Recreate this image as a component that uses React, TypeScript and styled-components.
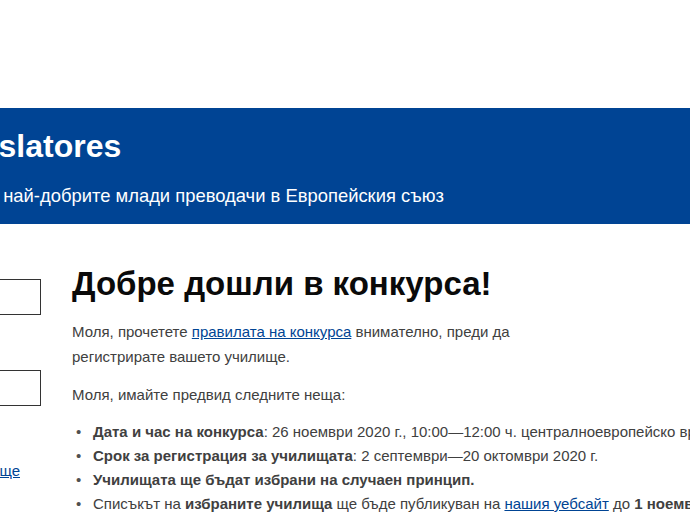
import React from "react";
import styled, { createGlobalStyle } from "styled-components";

const GlobalStyle = createGlobalStyle`
  html, body {
    margin: 0;
    padding: 0;
    background: #ffffff;
    overflow: hidden;
  }
  body {
    font-family: "Liberation Sans", Arial, sans-serif;
    color: #404040;
  }
`;

const Page = styled.div`
  width: 1400px;
  margin-left: -260px;
`;

const TopBar = styled.div`
  height: 108px;
  background: #ffffff;
`;

const Banner = styled.header`
  height: 116px;
  background: #004494;
  color: #ffffff;
  box-sizing: border-box;
  padding: 20px 0 0 54px;
`;

const SiteTitle = styled.h1`
  margin: 0;
  font-size: 32px;
  line-height: 1.15;
  font-weight: 700;
`;

const SiteSubtitle = styled.p`
  margin: 20px 0 0 -5px;
  font-size: 18.4px;
  line-height: 1.15;
`;

const Body = styled.div`
  display: flex;
  padding-top: 40px;
`;

const Sidebar = styled.aside`
  width: 301px;
  flex: none;
  display: flex;
  flex-direction: column;
`;

const Field = styled.div<{ $gap?: number }>`
  display: flex;
  flex-direction: column;
  margin-top: ${(p) => p.$gap ?? 0}px;
`;

const Label = styled.label`
  font-size: 15px;
  line-height: 15px;
  color: #404040;
`;

const Input = styled.input`
  box-sizing: border-box;
  width: 100%;
  height: 36px;
  border: 1px solid #333333;
  border-radius: 0;
  padding: 0 8px;
  font: inherit;
  outline: none;
`;

const SideLink = styled.a`
  align-self: flex-end;
  margin: 56px 21px 0 0;
  font-size: 15px;
  line-height: 17px;
  color: #004494;
  text-decoration: underline;
`;

const Main = styled.main`
  margin-left: 31px;
  padding-top: 1px;
  flex: 1;
`;

const Heading = styled.h2`
  margin: 0;
  font-size: 33px;
  line-height: 1.15;
  font-weight: 700;
  color: #0a0a0a;
`;

const Para = styled.p<{ $mt: number }>`
  margin: ${(p) => p.$mt}px 0 0;
  max-width: 480px;
  font-size: 15px;
  line-height: 25px;
  color: #404040;
`;

const Link = styled.a`
  color: #004494;
  text-decoration: underline;
`;

const List = styled.ul`
  margin: 13px 0 0;
  padding-left: 21px;
  list-style: none;
  font-size: 15px;
  line-height: 24px;
  color: #404040;
  white-space: nowrap;
`;

const Item = styled.li`
  &::before {
    content: "•";
    display: inline-block;
    width: 17px;
    margin-left: -17px;
    color: #505050;
  }
`;

export default function App() {
  return (
    <>
      <GlobalStyle />
      <Page>
        <TopBar />
        <Banner>
          <SiteTitle>Juvenes Translatores</SiteTitle>
          <SiteSubtitle>
            Конкурс за откриване на най-добрите млади преводачи в Европейския съюз
          </SiteSubtitle>
        </Banner>
        <Body>
          <Sidebar>
            <Field>
              <Label htmlFor="email">Имейл адрес</Label>
              <Input id="email" type="text" />
            </Field>
            <Field $gap={40}>
              <Label htmlFor="pass">Парола</Label>
              <Input id="pass" type="password" />
            </Field>
            <SideLink href="#">Регистрирайте вашето училище</SideLink>
          </Sidebar>
          <Main>
            <Heading>Добре дошли в конкурса!</Heading>
            <Para $mt={16}>
              Моля, прочетете <Link href="#">правилата на конкурса</Link>{" "}
              внимателно, преди да регистрирате вашето училище.
            </Para>
            <Para $mt={13}>Моля, имайте предвид следните неща:</Para>
            <List>
              <Item>
                <b>Дата и час на конкурса</b>: 26 ноември 2020 г., 10:00—12:00 ч.
                централноевропейско време
              </Item>
              <Item>
                <b>Срок за регистрация за училищата</b>: 2 септември—20 октомври 2020 г.
              </Item>
              <Item>
                <b>Училищата ще бъдат избрани на случаен принцип.</b>
              </Item>
              <Item>
                Списъкът на <b>избраните училища</b> ще бъде публикуван на{" "}
                <Link href="#">нашия уебсайт</Link> до <b>1 ноември 2020 г.</b>
              </Item>
            </List>
          </Main>
        </Body>
      </Page>
    </>
  );
}
